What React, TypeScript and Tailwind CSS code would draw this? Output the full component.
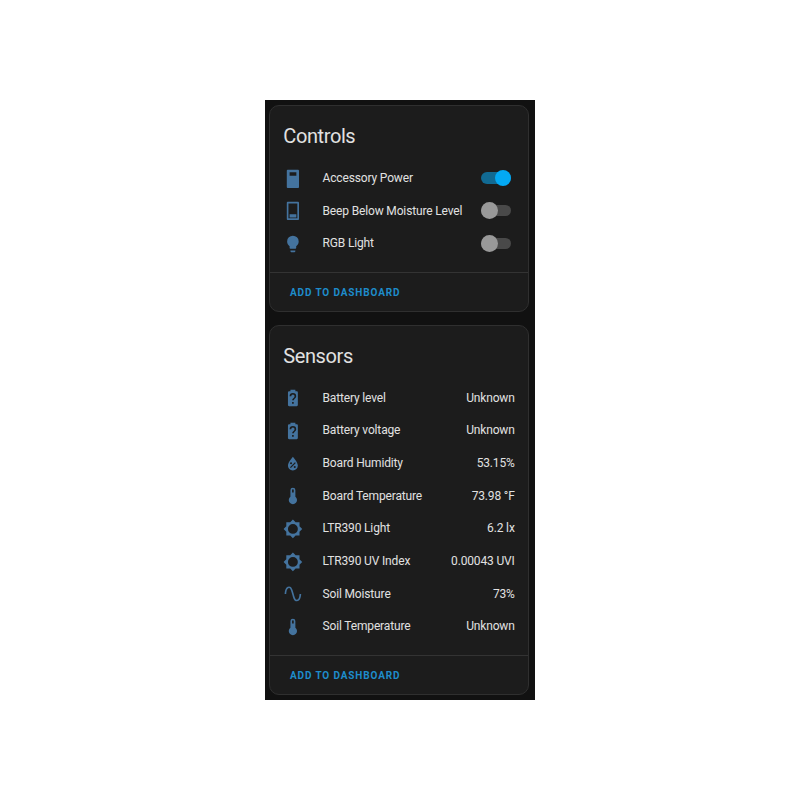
import { useState } from 'react';
import clsx from 'clsx';

const icons = {
  switchOn:
    'M6 1C5.2 1 4.6 1.5 4.6 2.3V21.7C4.6 22.5 5.2 23 6 23H18C18.8 23 19.4 22.5 19.4 21.7V2.3C19.4 1.5 18.8 1 18 1H6M8 4V8.2H16.2V4H8Z',
  switchOff:
    'M6 1C5.2 1 4.6 1.5 4.6 2.3V21.7C4.6 22.5 5.2 23 6 23H18C18.8 23 19.4 22.5 19.4 21.7V2.3C19.4 1.5 18.8 1 18 1H6M6.6 3H17.4V21H6.6V3M8 16V20H16.2V16H8Z',
  bulb: 'M12,2A7,7 0 0,0 5,9C5,11.38 6.19,13.47 8,14.74V17A1,1 0 0,0 9,18H15A1,1 0 0,0 16,17V14.74C17.81,13.47 19,11.38 19,9A7,7 0 0,0 12,2M9,21A1,1 0 0,0 10,22H14A1,1 0 0,0 15,21V20H9V21Z',
  battery:
    'M15.07,12.25L14.17,13.17C13.63,13.71 13.25,14.18 13.09,15H11.05C11.16,14.1 11.56,13.28 12.17,12.67L13.41,11.41C13.78,11.05 14,10.55 14,10C14,8.89 13.1,8 12,8A2,2 0 0,0 10,10H8A4,4 0 0,1 12,6A4,4 0 0,1 16,10C16,10.88 15.64,11.68 15.07,12.25M13,19H11V17H13M16.67,4H15V2H9V4H7.33A1.33,1.33 0 0,0 6,5.33V20.66C6,21.4 6.6,22 7.33,22H16.67A1.34,1.34 0 0,0 18,20.67V5.33C18,4.6 17.4,4 16.67,4Z',
  humidity:
    'M12,3.25C12,3.25 6,10 6,14C6,17.32 8.69,20 12,20A6,6 0 0,0 18,14C18,10 12,3.25 12,3.25M14.47,9.97L15.53,11.03L9.53,17.03L8.47,15.97M9.75,10A1.25,1.25 0 0,1 11,11.25A1.25,1.25 0 0,1 9.75,12.5A1.25,1.25 0 0,1 8.5,11.25A1.25,1.25 0 0,1 9.75,10M14.25,14.5A1.25,1.25 0 0,1 15.5,15.75A1.25,1.25 0 0,1 14.25,17A1.25,1.25 0 0,1 13,15.75A1.25,1.25 0 0,1 14.25,14.5Z',
  thermometer: 'M15 13V5A3 3 0 0 0 9 5V13A5 5 0 1 0 15 13M12 4A1 1 0 0 1 13 5V8H11V5A1 1 0 0 1 12 4Z',
  brightness:
    'M12,18A6,6 0 0,1 6,12A6,6 0 0,1 12,6A6,6 0 0,1 18,12A6,6 0 0,1 12,18M20,15.31L23.31,12L20,8.69V4H15.31L12,0.69L8.69,4H4V8.69L0.69,12L4,15.31V20H8.69L12,23.31L15.31,20H20V15.31Z',
  wave: 'M16.5,21C13.5,21 12.31,16.76 11.05,12.28C10.14,9.04 9,5 7.5,5C4.11,5 4,11.93 4,12H2C2,11.63 2.06,3 7.5,3C10.5,3 11.71,7.25 12.97,11.74C13.83,14.8 15,19 16.5,19C19.94,19 20.03,12.07 20.03,12H22.03C22.03,12.37 21.97,21 16.5,21Z',
};

type IconName = keyof typeof icons;

const controls: { name: string; on: boolean; icon?: IconName }[] = [
  { name: 'Accessory Power', on: true },
  { name: 'Beep Below Moisture Level', on: false },
  { name: 'RGB Light', on: false, icon: 'bulb' },
];

const sensors: { name: string; value: string; icon: IconName }[] = [
  { name: 'Battery level', value: 'Unknown', icon: 'battery' },
  { name: 'Battery voltage', value: 'Unknown', icon: 'battery' },
  { name: 'Board Humidity', value: '53.15%', icon: 'humidity' },
  { name: 'Board Temperature', value: '73.98 °F', icon: 'thermometer' },
  { name: 'LTR390 Light', value: '6.2 lx', icon: 'brightness' },
  { name: 'LTR390 UV Index', value: '0.00043 UVI', icon: 'brightness' },
  { name: 'Soil Moisture', value: '73%', icon: 'wave' },
  { name: 'Soil Temperature', value: 'Unknown', icon: 'thermometer' },
];

function Row({ icon, name, children }: { icon: IconName; name: string; children: React.ReactNode }) {
  return (
    <div className="flex h-[32.7px] items-center">
      <svg viewBox="0 0 24 24" className="mt-px h-[19.8px] w-[19.8px] shrink-0 fill-[#44739e]">
        <path fillRule="evenodd" d={icons[icon]} />
      </svg>
      <span className="ml-[19.4px] flex-1 whitespace-nowrap">{name}</span>
      {children}
    </div>
  );
}

function Toggle({ on, label, onClick }: { on: boolean; label: string; onClick: () => void }) {
  return (
    <button
      role="switch"
      aria-checked={on}
      aria-label={label}
      onClick={onClick}
      className={clsx(
        'mr-[3.3px] flex h-[11.5px] w-[30px] items-center rounded-full',
        on ? 'justify-end bg-[#116a93]' : 'justify-start bg-[#494949]'
      )}
    >
      <span className={clsx('h-[16.5px] w-[16.5px] shrink-0 rounded-full', on ? 'bg-[#03a9f4]' : 'bg-[#999999]')} />
    </button>
  );
}

function Card({ title, children }: { title: string; children: React.ReactNode }) {
  return (
    <section className="rounded-[10px] border border-[#2f2f2f] bg-[#1c1c1c]">
      <h2 className="px-[13.3px] pt-[14px] text-[20px] leading-[32px] tracking-[-0.4px]">{title}</h2>
      <div className="px-[13.3px] pt-[9.7px] pb-[12.3px] text-[12px] tracking-[-0.15px]">{children}</div>
      <div className="flex h-[38.6px] items-center border-t border-[#333333] px-[20px] pt-px">
        <button className="text-[10px] font-bold tracking-[0.87px] text-[#1e8ccb]">ADD TO DASHBOARD</button>
      </div>
    </section>
  );
}

export default function App() {
  const [states, setStates] = useState(controls.map((c) => c.on));

  const toggle = (index: number) => {
    setStates((prev) => prev.map((on, i) => (i === index ? !on : on)));
  };

  return (
    <div className="flex h-screen items-center justify-center bg-white font-[Roboto,sans-serif] text-[#e1e1e1]">
      <main className="flex h-[600px] w-[270px] flex-col gap-[13px] bg-[#111111] pt-[5px] pr-[6px] pl-[4px]">
        <Card title="Controls">
          {controls.map((c, i) => (
            <Row key={c.name} name={c.name} icon={c.icon ?? (states[i] ? 'switchOn' : 'switchOff')}>
              <Toggle on={states[i]} label={c.name} onClick={() => toggle(i)} />
            </Row>
          ))}
        </Card>
        <Card title="Sensors">
          {sensors.map((s) => (
            <Row key={s.name} name={s.name} icon={s.icon}>
              <span>{s.value}</span>
            </Row>
          ))}
        </Card>
      </main>
    </div>
  );
}
